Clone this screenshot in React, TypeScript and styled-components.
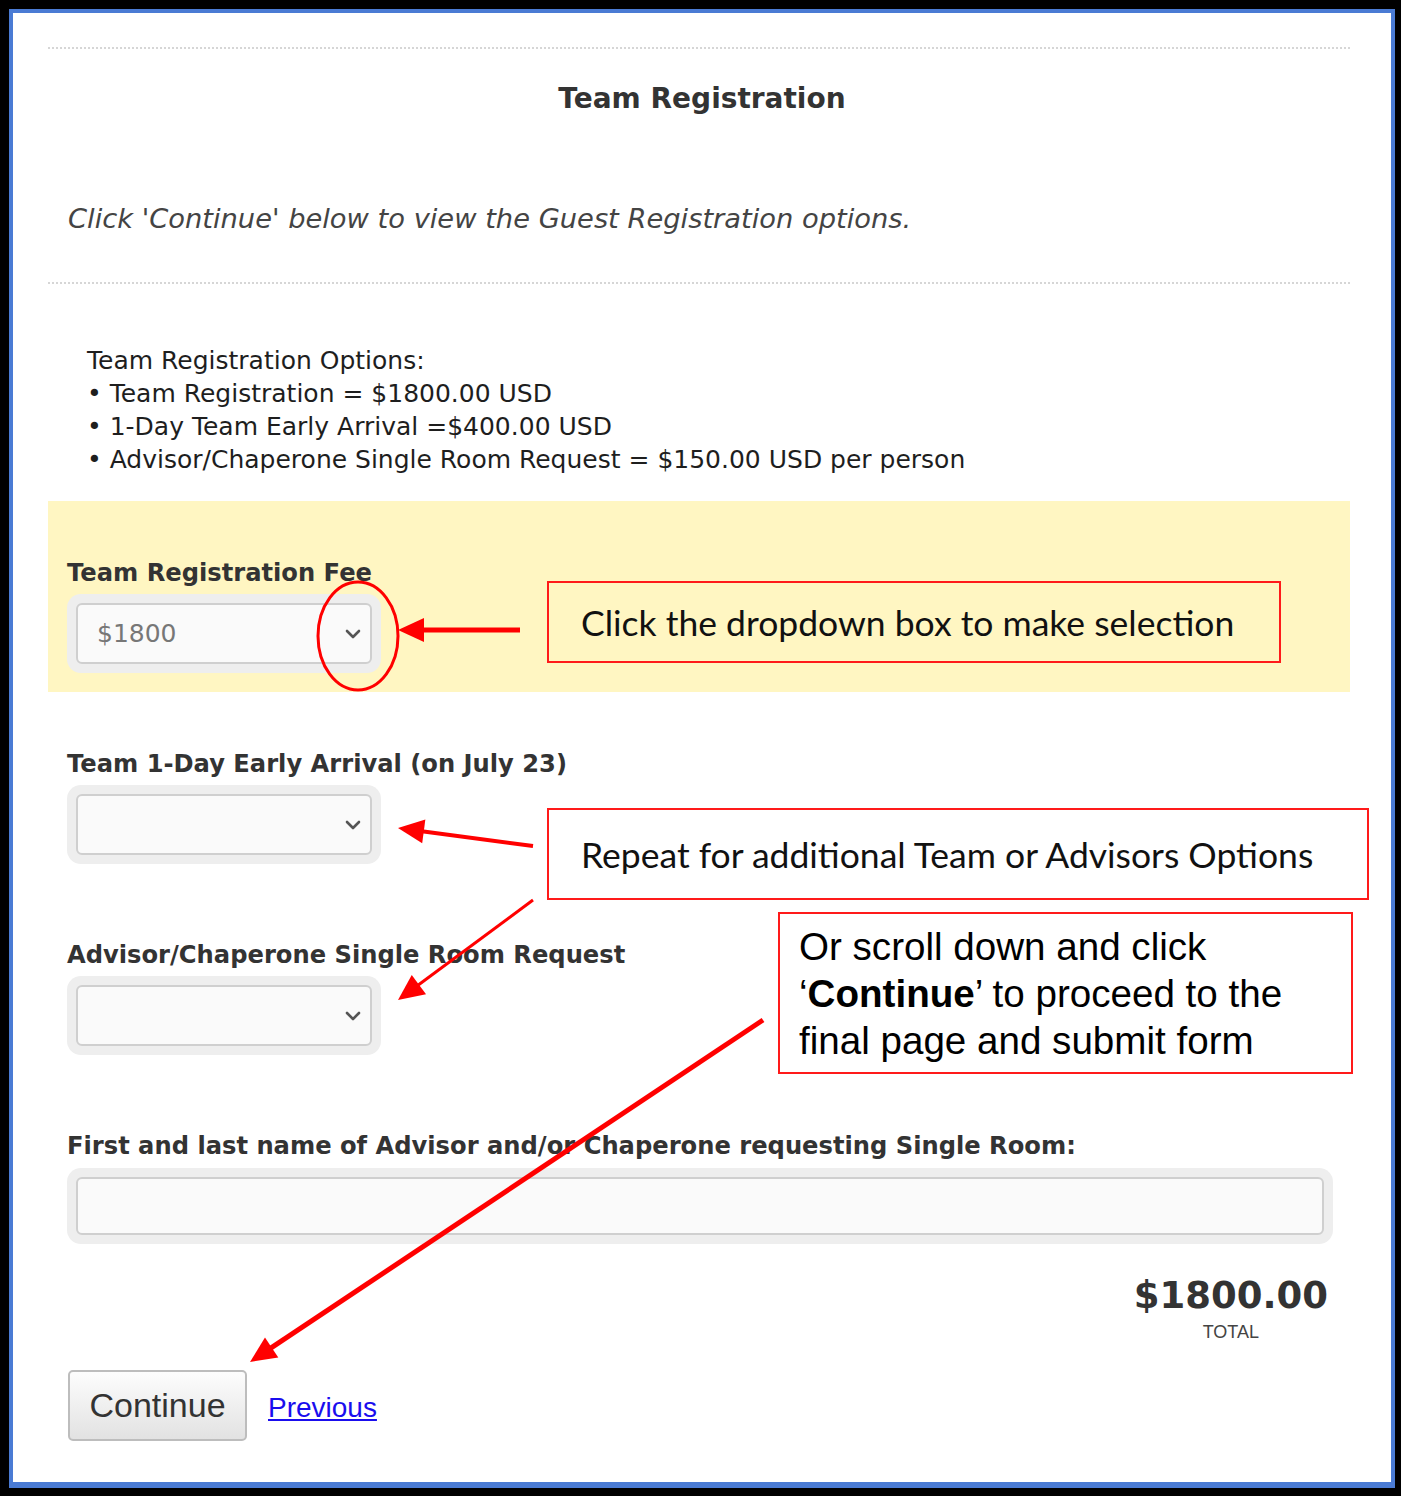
import React from 'react';
import styled, { createGlobalStyle } from 'styled-components';

const GlobalStyle = createGlobalStyle`
  html, body {
    margin: 0;
    padding: 0;
    background: #000;
  }
  body {
    min-height: 1496px;
  }
`;

const Page = styled.div`
  position: relative;
  width: 1401px;
  height: 1496px;
  overflow: hidden;
`;

const Frame = styled.div`
  margin: 9px 6px 0 9px;
  height: 1479px;
  box-sizing: border-box;
  border: 4px solid #4a7bd4;
  border-bottom-width: 6px;
  background: #fff;
  padding: 34px 41px 0 35px;
  font-family: 'DejaVu Sans', Verdana, sans-serif;
  color: #333;
  display: flex;
  flex-direction: column;
`;

const Divider = styled.div`
  border-top: 2px dotted #d6d6d6;
`;

const Heading = styled.h1`
  margin: 34px 0 0;
  padding-left: 6px;
  font-size: 28px;
  line-height: 32px;
  font-weight: bold;
  text-align: center;
  color: #333;
`;

const Intro = styled.p`
  margin: 87px 0 46px;
  padding-left: 20px;
  font-style: italic;
  font-size: 27.3px;
  line-height: 34px;
  color: #444;
`;

const Options = styled.div`
  margin: 60px 0 25px;
  padding-left: 39px;
  font-size: 25px;
  line-height: 33px;
  color: #1e1e1e;
`;

const Field = styled.div<{ $highlight?: boolean }>`
  padding: 58px 19px 19px;
  background: ${(p) => (p.$highlight ? '#fff6c2' : 'transparent')};
`;

const Label = styled.div`
  font-size: 24.2px;
  line-height: 28px;
  font-weight: bold;
  color: #333;
`;

const SelectWell = styled.div<{ $wide?: boolean }>`
  margin-top: ${(p) => (p.$wide ? '8px' : '7px')};
  width: ${(p) => (p.$wide ? '1266px' : '314px')};
  height: ${(p) => (p.$wide ? '76px' : '79px')};
  box-sizing: border-box;
  padding: 9px;
  background: #eee;
  border-radius: 14px;
`;

const SelectBox = styled.div`
  height: 100%;
  box-sizing: border-box;
  border: 2px solid #cfcfcf;
  border-radius: 6px;
  background: #fafafa;
  display: flex;
  align-items: center;
  justify-content: space-between;
  padding: 0 5px 0 19px;
  font-size: 25px;
  color: #777;
`;

const Chevron = () => (
  <svg width="24" height="24" viewBox="0 0 24 24" fill="none" stroke="#555" strokeWidth="2.6" strokeLinecap="round" strokeLinejoin="round">
    <path d="m6 9 6 6 6-6" />
  </svg>
);

const TotalBlock = styled.div`
  align-self: flex-end;
  margin: 12px 22px 0 0;
  text-align: center;
`;

const Amount = styled.div`
  font-size: 37px;
  line-height: 42px;
  font-weight: bold;
  color: #333;
`;

const TotalLabel = styled.div`
  margin-top: 5px;
  font-family: 'Liberation Sans', Arial, sans-serif;
  font-size: 18px;
  line-height: 20px;
  color: #444;
`;

const Actions = styled.div`
  margin: 28px 0 0 20px;
  display: flex;
  align-items: baseline;
  gap: 21px;
  font-family: 'Liberation Sans', Arial, sans-serif;
`;

const Button = styled.button`
  width: 179px;
  height: 71px;
  border: 2px solid #bdbdbd;
  border-radius: 5px;
  background: linear-gradient(#fdfdfd, #e2e2e2);
  font-family: 'Liberation Sans', Arial, sans-serif;
  font-size: 34px;
  color: #333;
  padding: 0;
`;

const PrevLink = styled.a`
  font-size: 28px;
  color: #1a0dee;
  text-decoration: underline;
`;

const Callout = styled.div<{ $x: number; $y: number; $w: number; $h: number; $fill?: boolean }>`
  position: absolute;
  left: ${(p) => p.$x}px;
  top: ${(p) => p.$y}px;
  width: ${(p) => p.$w}px;
  height: ${(p) => p.$h}px;
  box-sizing: border-box;
  border: 2px solid #ff1a1a;
  background: ${(p) => (p.$fill ? '#fff' : 'transparent')};
  display: flex;
  align-items: center;
  padding-left: 32px;
  font-family: Lato, 'Open Sans', sans-serif;
  font-size: 35.5px;
  color: #111;
`;

const NoteCallout = styled(Callout)`
  display: block;
  padding: 9px 0 0 19px;
  font-family: 'Liberation Sans', Arial, sans-serif;
  font-size: 38.6px;
  line-height: 47px;
  color: #000;
`;

const Overlay = styled.svg`
  position: absolute;
  left: 0;
  top: 0;
`;

type ArrowProps = { x1: number; y1: number; x2: number; y2: number; w: number };

const Arrow = ({ x1, y1, x2, y2, w }: ArrowProps) => {
  const dx = x2 - x1;
  const dy = y2 - y1;
  const len = Math.hypot(dx, dy);
  const ux = dx / len;
  const uy = dy / len;
  const head = 26;
  const half = 12;
  const bx = x2 - ux * head;
  const by = y2 - uy * head;
  const pts = `${x2},${y2} ${bx - uy * half},${by + ux * half} ${bx + uy * half},${by - ux * half}`;
  return (
    <g>
      <line x1={x1} y1={y1} x2={bx + ux * 2} y2={by + uy * 2} stroke="#ff0000" strokeWidth={w} />
      <polygon points={pts} fill="#ff0000" />
    </g>
  );
};

const fields = [
  { label: 'Team Registration Fee', value: '$1800', highlight: true },
  { label: 'Team 1-Day Early Arrival (on July 23)', value: '' },
  { label: 'Advisor/Chaperone Single Room Request', value: '' },
];

const App = () => {
  return (
    <Page>
      <GlobalStyle />
      <Frame>
        <Divider />
        <Heading>Team Registration</Heading>
        <Intro>Click 'Continue' below to view the Guest Registration options.</Intro>
        <Divider />
        <Options>
          Team Registration Options:
          <br />• Team Registration = $1800.00 USD
          <br />• 1-Day Team Early Arrival =$400.00 USD
          <br />• Advisor/Chaperone Single Room Request = $150.00 USD per person
        </Options>
        {fields.map((f) => (
          <Field key={f.label} $highlight={f.highlight}>
            <Label>{f.label}</Label>
            <SelectWell>
              <SelectBox>
                <span>{f.value}</span>
                <Chevron />
              </SelectBox>
            </SelectWell>
          </Field>
        ))}
        <Field>
          <Label>First and last name of Advisor and/or Chaperone requesting Single Room:</Label>
          <SelectWell $wide>
            <SelectBox />
          </SelectWell>
        </Field>
        <TotalBlock>
          <Amount>$1800.00</Amount>
          <TotalLabel>TOTAL</TotalLabel>
        </TotalBlock>
        <Actions>
          <Button>Continue</Button>
          <PrevLink href="#">Previous</PrevLink>
        </Actions>
      </Frame>

      <Callout $x={547} $y={581} $w={734} $h={82}>
        Click the dropdown box to make selection
      </Callout>
      <Callout $x={547} $y={808} $w={822} $h={92} $fill>
        Repeat for additional Team or Advisors Options
      </Callout>
      <NoteCallout $x={778} $y={912} $w={575} $h={162} $fill>
        Or scroll down and click
        <br />‘<b>Continue</b>’ to proceed to the
        <br />final page and submit form
      </NoteCallout>

      <Overlay width="1401" height="1496">
        <ellipse cx="358" cy="636" rx="40" ry="54" fill="none" stroke="#ff0000" strokeWidth="3" />
        <Arrow x1={520} y1={630} x2={398} y2={630} w={5} />
        <Arrow x1={533} y1={846} x2={398} y2={828} w={4} />
        <Arrow x1={533} y1={900} x2={398} y2={1000} w={3} />
        <Arrow x1={763} y1={1020} x2={250} y2={1362} w={5} />
      </Overlay>
    </Page>
  );
};

export default App;
